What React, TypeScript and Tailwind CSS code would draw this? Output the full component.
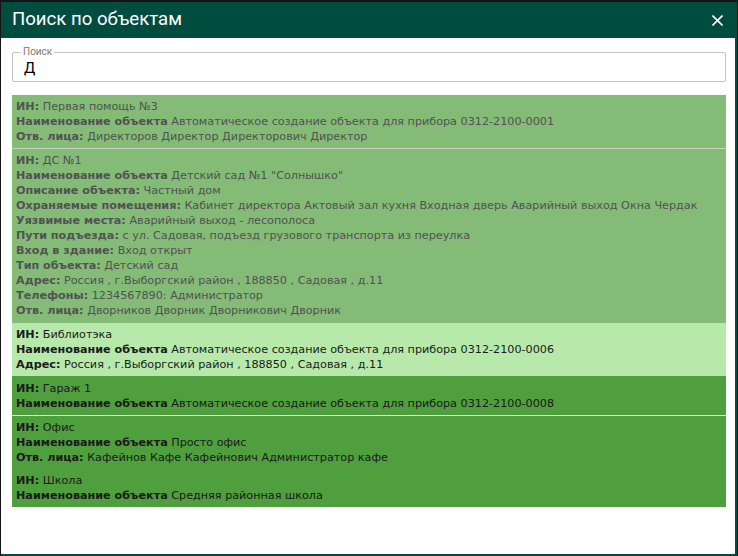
import { useState } from "react"

type Row = [string, string]

type Item = {
  tone: "mid" | "light" | "dark"
  border?: string
  rows: Row[]
}

const items: Item[] = [
  {
    tone: "mid",
    rows: [
      ["ИН:", "Первая помощь №3"],
      ["Наименование объекта", "Автоматическое создание объекта для прибора 0312-2100-0001"],
      ["Отв. лица:", "Директоров Директор Директорович Директор"],
    ],
  },
  {
    tone: "mid",
    border: "border-t border-[#c6d6c2]",
    rows: [
      ["ИН:", "ДС №1"],
      ["Наименование объекта", 'Детский сад №1 "Солнышко"'],
      ["Описание объекта:", "Частный дом"],
      ["Охраняемые помещения:", "Кабинет директора Актовый зал кухня Входная дверь Аварийный выход Окна Чердак"],
      ["Уязвимые места:", "Аварийный выход - лесополоса"],
      ["Пути подъезда:", "с ул. Садовая, подъезд грузового транспорта из переулка"],
      ["Вход в здание:", "Вход открыт"],
      ["Тип объекта:", "Детский сад"],
      ["Адрес:", "Россия , г.Выборгский район , 188850 , Садовая , д.11"],
      ["Телефоны:", "1234567890: Администратор"],
      ["Отв. лица:", "Дворников Дворник Дворникович Дворник"],
    ],
  },
  {
    tone: "light",
    border: "border-t border-[#84bb77]",
    rows: [
      ["ИН:", "Библиотэка"],
      ["Наименование объекта", "Автоматическое создание объекта для прибора 0312-2100-0006"],
      ["Адрес:", "Россия , г.Выборгский район , 188850 , Садовая , д.11"],
    ],
  },
  {
    tone: "dark",
    border: "border-t border-[#4f9f3e]",
    rows: [
      ["ИН:", "Гараж 1"],
      ["Наименование объекта", "Автоматическое создание объекта для прибора 0312-2100-0008"],
    ],
  },
  {
    tone: "dark",
    border: "border-t border-[#d3e6cf]",
    rows: [
      ["ИН:", "Офис"],
      ["Наименование объекта", "Просто офис"],
      ["Отв. лица:", "Кафейнов Кафе Кафейнович Администратор кафе"],
    ],
  },
  {
    tone: "dark",
    rows: [
      ["ИН:", "Школа"],
      ["Наименование объекта", "Средняя районная школа"],
    ],
  },
]

const toneClass = {
  mid: "bg-[#84bb77] text-[#525252]",
  light: "bg-[#b6e9aa] text-[#1c1c1c]",
  dark: "bg-[#4f9f3e] text-[#1a1a1a]",
}

const App = () => {
  const [query, setQuery] = useState("Д")
  return <div className="h-[556px] w-[738px] bg-[#141414] px-[1px] pt-[2px]">
    <div className="flex h-full flex-col">
      <header className="flex h-[36px] shrink-0 items-center justify-between bg-[#004d40] pl-[11px] pr-[14px]">
        <h1 className="-mt-[1px] font-['Roboto',sans-serif] text-[18.6px] font-normal leading-none text-white">Поиск по объектам</h1>
        <svg width={11} height={11} viewBox="0 0 11 11" className="cursor-pointer">
          <path d="M0.5 0.5 L10.5 10.5 M10.5 0.5 L0.5 10.5" stroke="white" strokeWidth={1.6} />
        </svg>
      </header>
      <div className="flex-1 border-r-2 border-b-2 border-[#004d40] bg-white pl-[11px] pr-[9px] pt-[8px]">
        <fieldset className="rounded-[2px] border border-[#c4c4c4] px-[8px] pb-[2px]">
          <legend className="px-[2px] font-['Roboto',sans-serif] text-[10px] leading-[12px] text-[#7a7a7a]">Поиск</legend>
          <input
            type="text"
            value={query}
            onChange={event => setQuery(event.target.value)}
            className="block h-[21px] w-full bg-transparent pl-[3px] font-['Roboto',sans-serif] text-[15px] text-black outline-none"
          />
        </fieldset>
        <div className="mt-[13px] font-['DejaVu_Sans',sans-serif] text-[11.2px] leading-[15px]">
          {items.map((item, i) => (
            <div key={i} className={`px-[4px] py-[4px] ${toneClass[item.tone]} ${item.border ?? ""}`}>
              {item.rows.map(([label, value], j) => (
                <div key={j} className="whitespace-nowrap">
                  <b className="font-bold">{label}</b> {value}
                </div>
              ))}
            </div>
          ))}
        </div>
      </div>
    </div>
  </div>
}

export default App
